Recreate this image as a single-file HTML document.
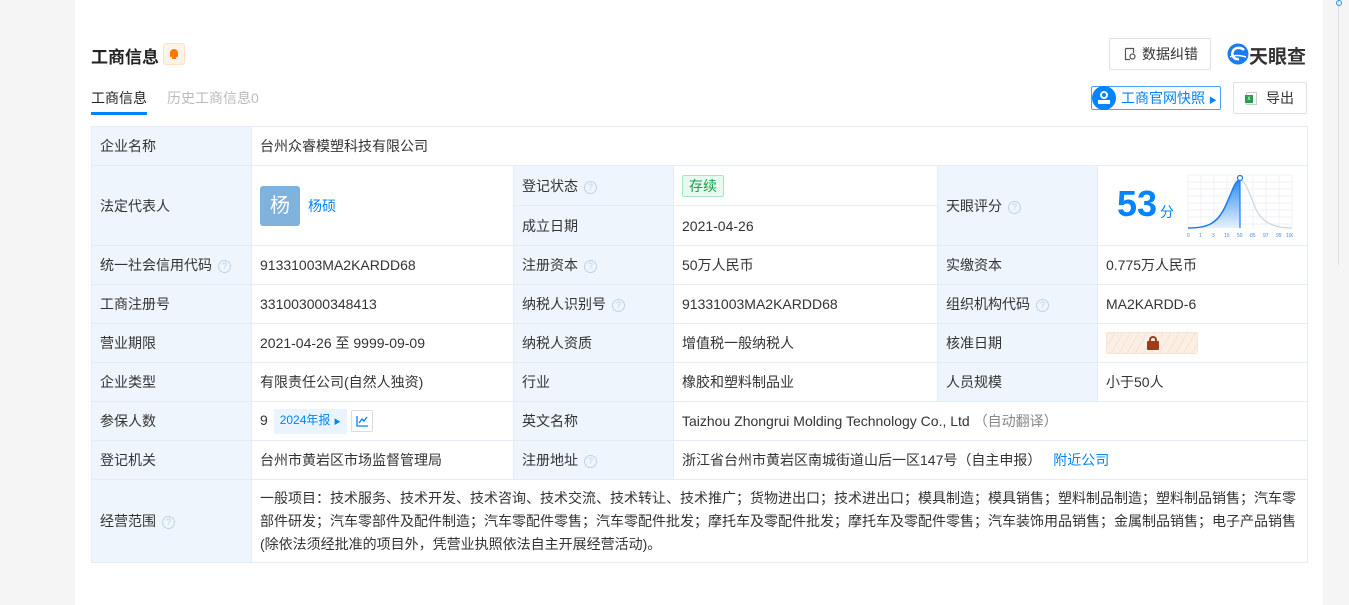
<!DOCTYPE html>
<html><head><meta charset="utf-8"><style>
*{margin:0;padding:0;box-sizing:border-box}
body{width:1349px;height:605px;background:#f5f5f5;font-family:"Liberation Sans","Noto Sans CJK SC",sans-serif;color:#333;font-size:14px;position:relative;overflow:hidden}
.panel{position:absolute;left:75px;top:0;width:1248px;height:605px;background:#fff}
.abs{position:absolute}
table{position:absolute;left:91px;top:126px;border-collapse:collapse;table-layout:fixed;width:1216px}
td{border:1px solid #e4edf6;padding:0 8px;height:39px;vertical-align:middle;line-height:20px}
td.l{background:#eef5fd}
.q{display:inline-block;width:13px;height:13px;border:1px solid #bcd3ea;border-radius:50%;color:#bcd3ea;font-size:9px;line-height:11px;text-align:center;margin-left:6px;vertical-align:1px}
.blue{color:#0084ff}
</style></head><body>
<div class="panel"></div>
<div class="abs" style="left:1338px;top:0;width:1px;height:265px;background:#dde"></div>
<div class="abs" style="left:1336px;top:0;width:6px;height:6px;border:1.5px solid #2b8cf0;border-radius:50%"></div>

<div class="abs" style="left:91px;top:43px;font-size:17px;font-weight:bold;color:#222">工商信息</div>
<div class="abs" style="left:163px;top:43px;width:22px;height:22px;background:#fff3e8;border:1px solid #ffe2c6;border-radius:3px"><div style="position:absolute;left:6px;top:5px;width:8px;height:8px;background:#ff7a00;border-radius:4px 4px 1px 1px"></div><div style="position:absolute;left:8px;top:13px;width:4px;height:2px;background:#ff7a00"></div></div>
<div class="abs" style="left:91px;top:88px;font-size:14px;color:#222">工商信息</div>
<div class="abs" style="left:91px;top:112px;width:56px;height:3px;background:#0084ff"></div>
<div class="abs" style="left:167px;top:88px;font-size:14px;color:#bbb">历史工商信息0</div>

<div class="abs" style="left:1109px;top:38px;width:102px;height:32px;border:1px solid #dde1e6;border-radius:2px;font-size:14px;line-height:30px;padding-left:14px"><svg width="12" height="14" style="vertical-align:-2px;margin-right:6px"><path d="M1.5 1.5H9.5V6M1.5 1.5V12.5H6" fill="none" stroke="#555" stroke-width="1.2"/><circle cx="8.5" cy="9.5" r="2.5" fill="none" stroke="#555" stroke-width="1.2"/></svg>数据纠错</div>
<svg class="abs" style="left:1227px;top:43px" width="22" height="22" viewBox="0 0 22 22"><circle cx="11" cy="11" r="10.5" fill="#1a7cf0"/><path d="M17 7C14 4 8 4 6 8S7 17 12 16" fill="none" stroke="#fff" stroke-width="2.5"/><path d="M3 14C7 12 12 12 19 14" fill="none" stroke="#fff" stroke-width="1.5"/></svg>
<div class="abs" style="left:1249px;top:42px;font-size:19px;font-weight:bold;color:#333">天眼查</div>

<div class="abs" style="left:1091px;top:86px;width:130px;height:24px;border:1px solid #4aa3ff;border-radius:2px;color:#0084ff;font-size:14px;line-height:22px;padding-left:29px">工商官网快照 <span style="font-size:8px">▶</span></div>
<div class="abs" style="left:1092px;top:86px;width:24px;height:24px;border-radius:50%;background:#0084ff"><div style="position:absolute;left:8px;top:5px;width:8px;height:8px;border:2px solid #fff;border-radius:50%"></div><div style="position:absolute;left:6px;top:14px;width:12px;height:4px;border:2px solid #fff"></div></div>
<div class="abs" style="left:1233px;top:82px;width:74px;height:32px;border:1px solid #dde1e6;border-radius:2px;font-size:14px;line-height:30px;padding-left:32px">导出</div>
<div class="abs" style="left:1246px;top:92px;width:11px;height:13px;background:#fff;border:1px solid #ccc"></div>
<div class="abs" style="left:1245px;top:95px;width:8px;height:8px;background:#2e9a4f;color:#fff;font-size:6px;line-height:8px;text-align:center">x</div>

<table>
<colgroup><col style="width:160px"><col style="width:262px"><col style="width:160px"><col style="width:264px"><col style="width:160px"><col style="width:210px"></colgroup>
<tr><td class="l">企业名称</td><td colspan="5">台州众睿模塑科技有限公司</td></tr>
<tr><td class="l" rowspan="2">法定代表人</td><td rowspan="2"><span style="display:inline-block;width:40px;height:40px;background:#7fb2dc;border-radius:3px;color:#fff;font-size:20px;line-height:40px;text-align:center;vertical-align:middle">杨</span><span class="blue" style="margin-left:8px;vertical-align:middle">杨硕</span></td><td class="l" style="height:40px">登记状态<span class="q">?</span></td><td style="height:40px"><span style="display:inline-block;border:1px solid #a6e6c0;background:#e8faf0;color:#17a04a;padding:0 6px;line-height:20px;border-radius:2px">存续</span></td><td class="l" rowspan="2">天眼评分<span class="q">?</span></td><td rowspan="2" style="position:relative;padding:0">
<span style="position:absolute;left:19px;top:18px;font-size:36px;font-weight:bold;color:#0084ff;line-height:40px">53</span><span style="position:absolute;left:62px;top:36px;font-size:14px;color:#0084ff">分</span>
<svg style="position:absolute;left:89px;top:6px" width="106" height="68" viewBox="0 0 106 68"><defs><linearGradient id="g" x1="0" y1="0" x2="0" y2="1"><stop offset="0" stop-color="#2a8cf0"/><stop offset="1" stop-color="#e8f2fd"/></linearGradient></defs>
<g stroke="#eef0f3" stroke-width="1"><path d="M1 3V56M14 3V56M27 3V56M40 3V56M53 3V56M66 3V56M79 3V56M92 3V56M105 3V56M1 3H105M1 10H105M1 17H105M1 24H105M1 31H105M1 38H105M1 45H105M1 52H105"/></g>
<path d="M1 56C20 56 30 52 38 35S48 8 53 8V56Z" fill="url(#g)"/>
<path d="M1 56C20 56 30 52 38 35S48 8 53 8" fill="none" stroke="#1a7cf0" stroke-width="1.5"/>
<path d="M53 8C58 8 62 20 68 35S86 56 105 56" fill="none" stroke="#c9d6e6" stroke-width="1.2"/>
<path d="M53 8V56" stroke="#1a7cf0" stroke-width="1.2"/>
<circle cx="53" cy="6" r="2.5" fill="#fff" stroke="#1a7cf0" stroke-width="1.2"/>
<g font-size="5" fill="#3b8de0" font-family="Liberation Sans"><text x="0" y="65">0</text><text x="12" y="65">1</text><text x="25" y="65">3</text><text x="37" y="65">15</text><text x="50" y="65">50</text><text x="63" y="65">85</text><text x="76" y="65">97</text><text x="89" y="65">99</text><text x="99" y="65">100</text></g></svg></td></tr>
<tr><td class="l" style="height:40px">成立日期</td><td style="height:40px">2021-04-26</td></tr>
<tr><td class="l">统一社会信用代码<span class="q">?</span></td><td>91331003MA2KARDD68</td><td class="l">注册资本<span class="q">?</span></td><td>50万人民币</td><td class="l">实缴资本</td><td>0.775万人民币</td></tr>
<tr><td class="l">工商注册号</td><td>331003000348413</td><td class="l">纳税人识别号<span class="q">?</span></td><td>91331003MA2KARDD68</td><td class="l">组织机构代码<span class="q">?</span></td><td>MA2KARDD-6</td></tr>
<tr><td class="l">营业期限</td><td>2021-04-26 至 9999-09-09</td><td class="l">纳税人资质</td><td>增值税一般纳税人</td><td class="l">核准日期</td><td><span style="display:inline-block;width:92px;height:22px;background:repeating-linear-gradient(120deg,#fbefe4 0 6px,#f6e2d2 6px 7px);border:1px solid #f6e4d4;border-radius:2px;vertical-align:middle;position:relative"><span style="position:absolute;left:40px;top:8px;width:12px;height:9px;background:#a0391e;border-radius:1px"></span><span style="position:absolute;left:42px;top:3px;width:8px;height:8px;border:2px solid #a0391e;border-radius:4px 4px 0 0;border-bottom:none"></span></span></td></tr>
<tr><td class="l">企业类型</td><td>有限责任公司(自然人独资)</td><td class="l">行业</td><td>橡胶和塑料制品业</td><td class="l">人员规模</td><td>小于50人</td></tr>
<tr><td class="l">参保人数</td><td>9 <span style="display:inline-block;background:#eaf4ff;color:#0084ff;font-size:12px;line-height:22px;padding:0 6px;margin-left:2px;vertical-align:middle">2024年报 <span style="font-size:7px">▶</span></span> <span style="display:inline-block;width:22px;height:22px;border:1px solid #d8dde3;border-radius:2px;vertical-align:middle;position:relative"><svg width="20" height="20" style="position:absolute;left:0;top:0"><path d="M5 5V15H16M7 12L10 8L12 10L15 6" fill="none" stroke="#0084ff" stroke-width="1.3"/></svg></span></td><td class="l">英文名称</td><td colspan="3">Taizhou Zhongrui Molding Technology Co., Ltd <span style="color:#888">（自动翻译）</span></td></tr>
<tr><td class="l">登记机关</td><td>台州市黄岩区市场监督管理局</td><td class="l">注册地址<span class="q">?</span></td><td colspan="3">浙江省台州市黄岩区南城街道山后一区147号（自主申报） <span class="blue" style="margin-left:8px">附近公司</span></td></tr>
<tr><td class="l" style="height:83px">经营范围<span class="q">?</span></td><td colspan="5" style="line-height:23px;padding-right:6px">一般项目：技术服务、技术开发、技术咨询、技术交流、技术转让、技术推广；货物进出口；技术进出口；模具制造；模具销售；塑料制品制造；塑料制品销售；汽车零部件研发；汽车零部件及配件制造；汽车零配件零售；汽车零配件批发；摩托车及零配件批发；摩托车及零配件零售；汽车装饰用品销售；金属制品销售；电子产品销售(除依法须经批准的项目外，凭营业执照依法自主开展经营活动)。</td></tr>
</table>
</body></html>
